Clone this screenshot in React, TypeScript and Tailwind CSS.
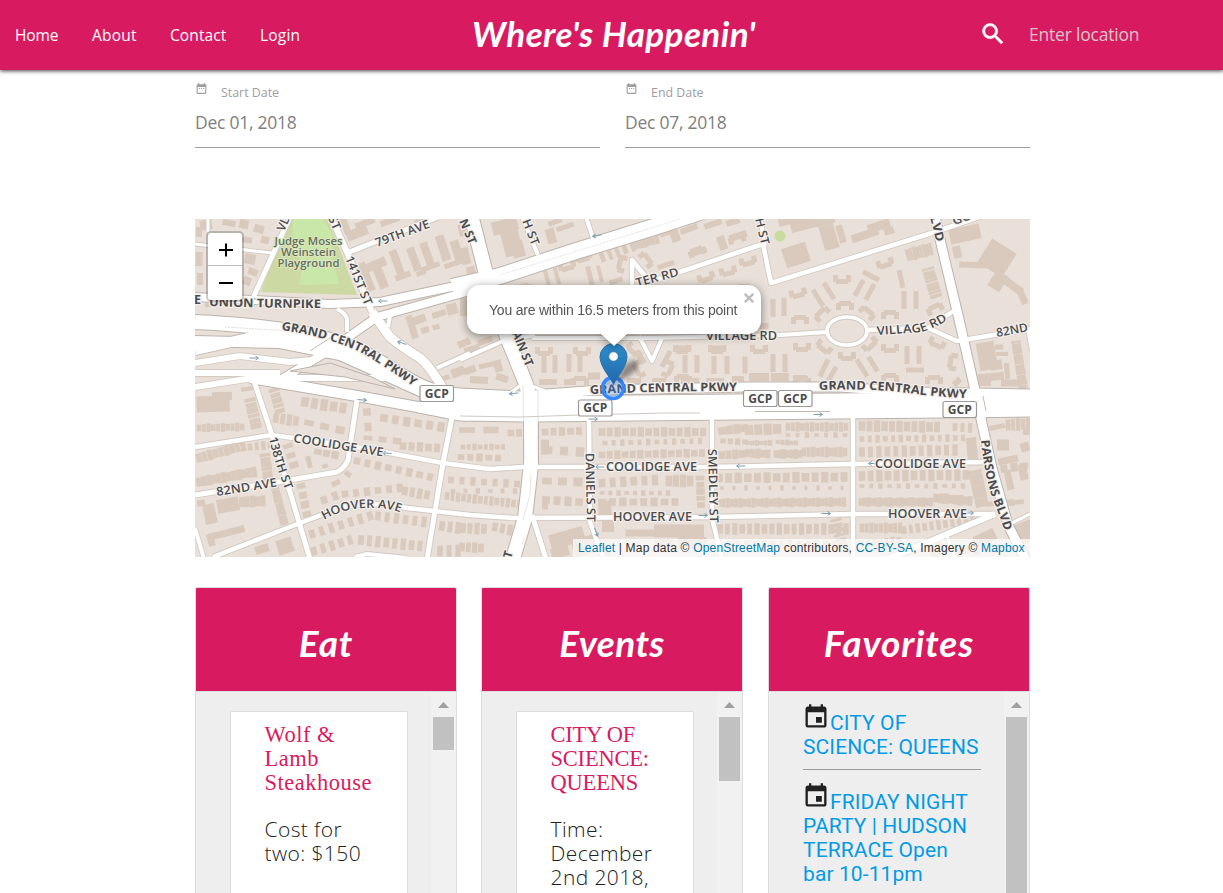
import React from "react";
import { MdDateRange, MdEvent } from "react-icons/md";

type Road = [string, number];

// Streets: path data and width
const roads: Road[] = [
  ["M195 244L272 253", 3],
  ["M208 219V232", 3],
  ["M290 217L253 298", 5],
  ["M331 217L347 252L372 312", 6],
  ["M372 312L390 337Q402 347 420 358Q430 366 445 392", 9],
  ["M347 253L438 217", 5],
  ["M337 309Q347 314 347 320V332", 4],
  ["M398 309L390 316L388 327", 4],
  ["M522 217L538 255", 4],
  ["M586 217L593 238", 4],
  ["M632 292L632 260L650 282L745 250L763 244L771 283L935 232L982 216", 4.5],
  ["M760 217L765 246", 4],
  ["M532 338H650L780 335L827 332", 4],
  ["M639 336L652 361L663 336", 4],
  ["M868 330L928 328L957 341L1030 329", 4.5],
  ["M928 328L955 310", 4.5],
  ["M460 360L503 341L535 335", 4],
  ["M437 368L470 353", 4],
  ["M195 363L240 356L290 362L312 360", 6],
  ["M195 373H280", 6],
  ["M195 387L253 378H395", 6],
  ["M253 378L272 435L290 492L310 559", 5],
  ["M195 447L272 435L357 447L443 463L490 469L523 467H712L852 464L990 462", 4.5],
  ["M195 495L290 480L337 472Q344 469 348 460L357 400", 5],
  ["M213 557L300 523L340 508Q370 500 407 508L470 515L513 518L712 517L853 514H995", 4.5],
  ["M995 514L888 559", 6],
  ["M453 412L443 463L427 559", 5],
  ["M195 528L204 559", 4],
  ["M355 557L367 554L407 558", 4],
  ["M589 418L590 522L604 559", 4.5],
  ["M712 418V518L722 559", 4.5],
  ["M853 416V559", 4.5],
  ["M532 515L546 559", 5],
  ["M947 536L955 559", 3],
  ["M1008 525L1030 514", 3],
  ["M1028 329L1032 350", 4],
  ["M510 393L524 383L545 391", 3],
];

const arterials: Road[] = [
  ["M195 297L330 304L380 302L470 283", 8],
  ["M452 287L500 276L573 252L660 225L700 212", 16],
  ["M280 380L330 350L377 317L470 291", 8],
  ["M471 215L483 262L491 295L509 342L522 374Q530 392 531 410V465L525 518L512 562", 14],
  ["M195 322Q260 325 306 334T388 367T440 392", 14],
  ["M195 350L253 337L310 344L377 366L430 396", 10],
  ["M195 341L280 343L340 355L420 391L470 400", 10],
  ["M250 378L357 396L423 408L470 416", 10],
  ["M415 388L460 393L520 396L600 390L745 387L840 387L910 392L1032 394", 9],
  ["M420 400L460 408L530 409L1032 404", 25],
  ["M935 217L942 248L958 315L975 390L983 428L992 468L1008 525L1026 560", 9],
];

// Building rows: start, end, count, building width, building height
type Row = [number, number, number, number, number, number, number];
const rows: Row[] = [
  [199, 428, 242, 427, 10, 4, 7],
  [250, 400, 256, 426, 6, 11, 4],
  [199, 458, 243, 446, 9, 5, 9],
  [250, 447, 270, 445, 4, 4, 7],
  [199, 482, 254, 472, 12, 5, 9],
  [265, 455, 268, 478, 6, 10, 4],
  [275, 488, 284, 522, 9, 8, 4],
  [242, 502, 263, 501, 5, 5, 10],
  [274, 390, 280, 411, 5, 10, 4],
  [276, 418, 296, 421, 4, 5, 10],
  [305, 402, 343, 408, 5, 7, 10],
  [309, 423, 340, 430, 3, 9, 6],
  [318, 452, 335, 455, 3, 7, 6],
  [288, 446, 294, 465, 3, 9, 5],
  [367, 412, 368, 427, 2, 7, 8],
  [384, 418, 441, 427, 6, 7, 8],
  [368, 438, 397, 441, 3, 8, 5],
  [403, 446, 437, 448, 5, 6, 8],
  [357, 461, 430, 477, 8, 6, 7],
  [345, 494, 400, 488, 6, 6, 7],
  [405, 491, 427, 495, 4, 5, 9],
  [301, 486, 307, 514, 4, 8, 6],
  [324, 500, 335, 496, 2, 6, 8],
  [312, 534, 370, 516, 7, 5, 9],
  [378, 516, 424, 522, 6, 5, 9],
  [314, 551, 350, 540, 5, 5, 9],
  [361, 540, 420, 546, 8, 5, 10],
  [442, 526, 458, 528, 3, 5, 10],
  [440, 551, 458, 551, 3, 5, 11],
  [447, 496, 519, 504, 14, 4, 8],
  [451, 480, 517, 484, 7, 5, 7],
  [453, 491, 515, 491, 6, 4, 4],
  [463, 447, 503, 447, 8, 4, 5],
  [461, 457, 498, 458, 5, 6, 6],
  [467, 430, 491, 430, 2, 15, 6],
  [511, 433, 519, 433, 2, 6, 7],
  [545, 432, 579, 431, 5, 6, 7],
  [548, 450, 580, 452, 3, 8, 8],
  [463, 528, 484, 529, 4, 5, 10],
  [495, 527, 510, 530, 3, 5, 9],
  [462, 547, 481, 548, 4, 5, 9],
  [602, 432, 703, 432, 14, 6, 8],
  [605, 443, 700, 441, 12, 4, 5],
  [602, 455, 702, 453, 14, 6, 7],
  [602, 483, 655, 480, 6, 6, 9],
  [669, 481, 690, 481, 4, 6, 11],
  [602, 493, 668, 493, 9, 4, 4],
  [602, 502, 675, 502, 8, 7, 7],
  [700, 478, 701, 505, 5, 8, 5],
  [547, 481, 578, 482, 3, 9, 7],
  [546, 500, 579, 502, 4, 7, 8],
  [722, 431, 744, 428, 4, 7, 8],
  [749, 430, 777, 429, 4, 8, 10],
  [788, 427, 846, 427, 13, 4, 8],
  [788, 435, 845, 435, 7, 4, 4],
  [723, 441, 745, 442, 4, 5, 5],
  [748, 443, 770, 443, 6, 4, 4],
  [778, 442, 796, 443, 5, 4, 4],
  [748, 453, 768, 454, 5, 5, 8],
  [776, 454, 800, 454, 7, 4, 8],
  [804, 452, 845, 452, 10, 4, 9],
  [722, 455, 742, 454, 4, 6, 8],
  [719, 478, 844, 477, 14, 7, 9],
  [722, 488, 842, 488, 11, 3, 4],
  [719, 503, 844, 502, 30, 4, 8],
  [720, 529, 846, 529, 18, 5, 10],
  [836, 520, 842, 545, 6, 11, 3],
  [720, 545, 843, 544, 15, 4, 7],
  [862, 426, 937, 427, 11, 6, 10],
  [862, 439, 963, 438, 14, 4, 6],
  [862, 452, 955, 450, 12, 5, 10],
  [971, 440, 973, 458, 5, 10, 5],
  [955, 427, 970, 428, 3, 4, 8],
  [862, 476, 966, 475, 13, 6, 10],
  [862, 486, 963, 486, 12, 4, 4],
  [861, 502, 931, 502, 20, 4, 8],
  [936, 498, 970, 501, 8, 5, 9],
  [975, 472, 982, 504, 9, 13, 4],
  [862, 528, 900, 528, 9, 4, 9],
  [904, 530, 973, 520, 11, 4, 8],
  [862, 545, 899, 541, 7, 4, 8],
  [1008, 425, 1028, 424, 5, 4, 11],
  [990, 504, 1019, 502, 4, 9, 5],
  [994, 470, 1024, 466, 4, 7, 7],
  [1016, 342, 1023, 387, 14, 9, 3],
  [908, 255, 931, 249, 8, 3, 12],
  [928, 269, 936, 296, 8, 12, 3],
  [602, 256, 632, 245, 5, 4, 13],
  [636, 243, 656, 237, 6, 4, 13],
];

// Single buildings: centre, size, rotation
type Block = [number, number, number, number, number];
const blocks: Block[] = [
  [213, 404, 33, 16, -2], [222, 396, 20, 8, -2], [228, 505, 22, 14, -10], [210, 514, 12, 20, -12],
  [226, 533, 38, 7, -14], [211, 540, 7, 12, -14], [201, 503, 8, 6, -10], [262, 549, 14, 8, -18],
  [285, 546, 16, 15, -18], [247, 389, 12, 4, -10], [309, 462, 5, 12, -14], [325, 466, 6, 4, -20],
  [336, 483, 9, 5, -25], [348, 474, 7, 5, 35], [206, 225, 12, 10, -8], [229, 223, 13, 6, 10],
  [244, 224, 9, 9, 12], [259, 229, 10, 8, 15], [247, 240, 10, 6, 8], [265, 240, 8, 7, 15],
  [199, 232, 6, 10, 0], [250, 259, 11, 10, 10], [253, 272, 10, 7, 20], [247, 281, 8, 8, 20],
  [199, 259, 7, 14, 0], [200, 279, 6, 12, 0], [211, 305, 12, 4, 0], [345, 225, 7, 18, -22],
  [357, 233, 22, 10, -22], [365, 223, 20, 6, -20], [390, 221, 20, 6, -20], [420, 221, 12, 5, -20],
  [366, 277, 9, 30, -22], [375, 265, 23, 9, -22], [380, 276, 9, 26, -22], [397, 263, 8, 27, -20],
  [403, 276, 16, 6, -20], [414, 259, 8, 24, -20], [427, 254, 8, 24, -20], [430, 267, 20, 5, -20],
  [443, 248, 9, 26, -18], [457, 251, 9, 22, -18], [453, 264, 18, 5, -18], [421, 273, 10, 5, -20],
  [412, 327, 7, 24, -18], [418, 320, 16, 8, -20], [439, 314, 14, 6, -18], [452, 309, 11, 11, -15],
  [425, 330, 8, 6, -15], [436, 327, 7, 5, -15], [464, 343, 13, 7, -22], [458, 372, 14, 9, -20],
  [445, 378, 10, 5, -20], [511, 240, 18, 32, -15], [505, 226, 26, 13, -15], [518, 249, 12, 17, -14],
  [465, 256, 9, 17, -14], [471, 271, 9, 9, -14], [462, 230, 7, 12, -14], [551, 236, 9, 15, -15],
  [565, 227, 18, 5, -18], [555, 222, 14, 5, -18], [547, 278, 4, 17, -16], [557, 276, 4, 17, -16],
  [590, 276, 5, 20, -14], [600, 274, 4, 17, -14], [616, 281, 14, 5, -18], [666, 265, 17, 5, -18],
  [465, 288, 10, 8, 0], [464, 307, 8, 18, 0], [472, 349, 16, 6, -18], [485, 341, 15, 6, -18],
  [544, 364, 5, 18, 0], [555, 364, 5, 18, 0], [569, 363, 5, 18, 0], [580, 363, 5, 18, 0],
  [548, 382, 18, 6, 0], [570, 382, 12, 6, 0], [594, 376, 12, 7, 0], [640, 357, 6, 15, -34],
  [666, 359, 5, 18, 28], [685, 364, 5, 18, 0], [697, 364, 5, 18, 0], [714, 365, 5, 18, 0],
  [727, 365, 5, 18, 0], [683, 348, 17, 5, 0], [718, 348, 17, 5, 0], [690, 381, 18, 6, 0],
  [715, 381, 18, 6, 0], [738, 379, 12, 6, 0], [634, 381, 14, 6, 0], [659, 381, 14, 6, 0],
  [488, 365, 18, 5, -12], [470, 370, 12, 7, -20], [479, 380, 18, 7, 3], [502, 378, 12, 7, 15],
  [498, 366, 8, 12, -15], [689, 229, 18, 6, -20], [675, 236, 9, 12, -20], [713, 224, 18, 6, -18],
  [722, 243, 8, 14, -20], [738, 236, 18, 7, -18], [699, 252, 16, 5, -18], [733, 222, 14, 6, -15],
  [744, 288, 12, 8, 0], [773, 308, 5, 18, 0], [784, 307, 5, 18, 0], [763, 326, 11, 6, 0],
  [796, 255, 25, 20, -18], [829, 237, 15, 25, -16], [841, 234, 7, 18, -16], [825, 221, 19, 8, -16],
  [865, 235, 28, 8, -18], [879, 226, 23, 9, -18], [889, 231, 10, 7, -18], [803, 223, 26, 14, -15],
  [787, 221, 17, 8, -15], [965, 234, 31, 15, -12], [957, 252, 8, 12, -12], [997, 258, 29, 28, 32],
  [973, 265, 28, 6, 2], [998, 281, 14, 18, 32], [1013, 286, 22, 8, 36], [1022, 296, 7, 17, -25],
  [859, 288, 5, 18, 28], [870, 292, 5, 18, 28], [818, 298, 5, 19, -32], [829, 291, 5, 19, -32],
  [871, 276, 18, 5, 28], [901, 279, 5, 18, -12], [904, 300, 5, 18, 0], [916, 300, 5, 18, 0],
  [907, 355, 5, 18, 0], [919, 355, 5, 18, 0], [915, 370, 18, 5, 0], [773, 363, 5, 18, 0],
  [785, 363, 5, 18, 0], [824, 368, 5, 19, 25], [832, 374, 5, 17, 30], [862, 368, 5, 20, -32],
  [873, 364, 5, 17, -32], [759, 377, 20, 8, 0], [780, 377, 18, 8, 0], [745, 365, 5, 17, 0],
  [800, 378, 14, 6, 0], [987, 356, 18, 28, -10], [996, 365, 12, 10, -8], [991, 377, 26, 8, -5],
  [999, 347, 8, 5, 0], [1002, 354, 12, 4, 0], [1007, 371, 5, 16, -5], [957, 382, 9, 6, -45],
  [1011, 383, 20, 7, 0], [985, 383, 12, 6, 0], [584, 546, 23, 18, -16], [567, 538, 35, 15, -16],
  [560, 552, 18, 11, -16], [608, 526, 12, 12, 0], [679, 531, 50, 13, 0], [692, 543, 29, 12, 0],
  [664, 543, 19, 8, 0], [605, 550, 9, 10, 0], [641, 533, 31, 7, 0], [1003, 445, 12, 11, 0],
  [997, 427, 16, 5, -12], [1008, 460, 20, 7, -12], [1009, 480, 7, 20, -12], [1023, 472, 8, 16, -12],
  [1027, 432, 8, 6, 0], [1025, 447, 9, 9, -15], [1025, 533, 24, 22, -22], [985, 538, 22, 12, -25],
  [937, 550, 15, 12, -25], [963, 551, 14, 8, -20], [975, 548, 6, 14, -25], [997, 549, 9, 8, -20],
  [545, 503, 6, 13, 0], [605, 508, 13, 15, 0], [545, 447, 8, 15, 0],
];

// Garden apartments: centre, rotation
const courts: [number, number, number][] = [
  [842, 279, 0], [885, 263, -18], [798, 293, -14], [800, 320, 180], [845, 306, 180],
  [822, 314, 135], [867, 313, 220], [890, 315, 180], [935, 309, 155], [937, 343, 25],
  [802, 347, 0], [847, 356, 0], [824, 347, 38], [870, 344, -42], [890, 348, 0],
  [759, 349, 0], [953, 362, 100], [934, 380, 180], [890, 378, 180], [802, 381, 180],
  [544, 351, 0], [582, 351, 0], [567, 266, -16], [583, 257, -16], [622, 264, 105],
  [646, 260, 232], [523, 289, 165], [543, 259, -16], [665, 231, -18], [697, 252, 160],
  [706, 277, -18], [737, 239, 165], [639, 369, 65], [668, 369, -65], [728, 271, -14],
  [748, 261, -14], [683, 379, 180], [614, 380, 180], [634, 350, 45], [580, 381, 180],
  [717, 349, 0], [682, 349, 0],
];

// Street names: baseline path, caption, rendered length, font weight
type Label = [string, string, number, number];
const labels: Label[] = [
  ["M284 232L291 216", "VL", 14, 600],
  ["M328 218L335 234", "ST", 14, 600],
  ["M377 247L434 226", "79TH AVE", 57, 600],
  ["M345 258L366 309", "141ST ST", 52, 600],
  ["M194 304H204", "E", 7, 700],
  ["M209 306Q265 308 323 308", "UNION TURNPIKE", 112, 700],
  ["M281 330Q330 337 362 353Q388 368 418 390", "GRAND CENTRAL PKWY", 146, 700],
  ["M459 221L470 247", "N ST", 26, 700],
  ["M522 221L533 249", "H ST", 27, 600],
  ["M755 219L762 248", "H ST", 27, 600],
  ["M637 287L682 275", "TER RD", 44, 600],
  ["M512 333L527 370", "AIN ST", 37, 700],
  ["M706 340H780", "VILLAGE RD", 71, 600],
  ["M877 335L922 332Q940 326 952 317", "VILLAGE RD", 73, 600],
  ["M997 337L1035 330", "82ND", 32, 600],
  ["M930 217L938 248", "LVD", 26, 700],
  ["M954 225L984 215", "GOL", 27, 600],
  ["M590 394Q665 391 740 391", "GRAND CENTRAL PKWY", 147, 700],
  ["M819 390Q870 388 908 393T970 398", "GRAND CENTRAL PKWY", 148, 700],
  ["M293 442L386 457", "COOLIDGE AVE", 91, 600],
  ["M217 496L280 486", "82ND AVE", 61, 600],
  ["M269 438Q274 462 287 494", "138TH ST", 55, 600],
  ["M324 520Q342 509 365 508T402 513", "HOOVER AVE", 79, 600],
  ["M606 471H700", "COOLIDGE AVE", 91, 600],
  ["M613 521H695", "HOOVER AVE", 79, 600],
  ["M585.500 453L587 525", "DANIELS ST", 69, 600],
  ["M708 449L710 526", "SMEDLEY ST", 74, 600],
  ["M875 468H970", "COOLIDGE AVE", 91, 600],
  ["M888 518H970", "HOOVER AVE", 79, 600],
  ["M981 440Q985 480 994 502T1007 540", "PARSONS BLVD", 94, 700],
  ["M511 559L514 549", "T", 7, 700],
];

const shields: [number, number][] = [[420, 385.5], [578.5, 400], [743.5, 390.5], [778.5, 390.5], [943, 401.5]];

const arrows: [number, number, number][] = [
  [254, 358, 0], [383, 301, 180], [402, 343, 200], [597, 235.5, 170], [362, 400, 5], [514, 393.500, 175],
  [593, 419, 0], [818, 414.500, 0], [387, 453, 185], [600, 467, 180], [741, 466, 180], [703, 515.500, 0],
  [826, 513.500, 0], [596, 532, 70], [873, 463.500, 180], [969, 513, 0], [258, 300, 20],
];

const places: [string, number, number][] = [
  ["Judge Moses", 245, 68],
  ["Weinstein", 256, 55],
  ["Playground", 266.5, 62],
];

function BuildingRow({ row }: { row: Row }) {
  const [x0, y0, x1, y1, n, w, h] = row;
  const angle = (Math.atan2(y1 - y0, x1 - x0) * 180) / Math.PI;
  const tilt = Math.abs(angle) > 45 ? angle - 90 : angle;
  return (
    <>
      {Array.from({ length: n }, (_, i) => {
        const t = n > 1 ? i / (n - 1) : 0;
        const x = x0 + (x1 - x0) * t;
        const y = y0 + (y1 - y0) * t;
        const hh = h + 0.6 + ((i * 7) % 3) - 1;
        const ww = w + 0.7 - ((i * 5) % 3) * 0.4;
        return <rect key={i} x={x - ww / 2} y={y - hh / 2} width={ww} height={hh} transform={`rotate(${tilt} ${x} ${y})`} />;
      })}
    </>
  );
}

function StreetMap() {
  return (
    <svg className="block h-full w-full" viewBox="195 219 835 338" fontFamily="'Open Sans', 'Noto Sans', sans-serif">
      <defs>
        <linearGradient id="pin" x1="0" y1="0" x2="0" y2="1">
          <stop offset="0" stopColor="#2f8fcb" />
          <stop offset="1" stopColor="#2068ad" />
        </linearGradient>
        <filter id="soft" x="-50%" y="-50%" width="200%" height="200%">
          <feGaussianBlur stdDeviation="2.500" />
        </filter>
      </defs>
      <rect x="195" y="219" width="835" height="338" fill="#e8e0d9" />
      <path d="M286 219H328L357 295L261 292Z" fill="#cdd9a2" />
      <path d="M293 219H323L333 235L331 254L339 284L299 285L303 263L292 247Z" fill="#c8e7a9" />
      <circle cx="780" cy="236" r="5.500" fill="#cadb9f" />
      <g fill="#d9cabd">
        {rows.map((row, i) => <BuildingRow key={i} row={row} />)}
        {blocks.map(([x, y, w, h, r], i) => (
          <rect key={i} x={x - w / 2} y={y - h / 2} width={w} height={h} transform={`rotate(${r} ${x} ${y})`} />
        ))}
        {courts.map(([x, y, r], i) => (
          <path key={i} d="M-9 -4H-4V0H4V-4H9V3H6V5H-6V3H-9Z" transform={`translate(${x} ${y}) rotate(${r})`} />
        ))}
      </g>
      <g fill="none" stroke="#d2c9c1" strokeLinejoin="round">
        {roads.map(([d, w], i) => <path key={i} d={d} strokeWidth={w + 1.8} />)}
        <ellipse cx="847" cy="331" rx="20" ry="14" strokeWidth="5.500" />
      </g>
      <g fill="none" stroke="#bcb4ac" strokeLinejoin="round">
        {arterials.map(([d, w], i) => <path key={i} d={d} strokeWidth={w + 2} />)}
      </g>
      <g fill="none" stroke="#fff" strokeLinejoin="round">
        {roads.map(([d, w], i) => <path key={i} d={d} strokeWidth={w} />)}
        <ellipse cx="847" cy="331" rx="20" ry="14" strokeWidth="3.700" />
        {arterials.map(([d, w], i) => <path key={i} d={d} strokeWidth={w} />)}
      </g>
      <path d="M330 363L372 377L395 389L345 377L290 371Z" fill="#e8e0d9" stroke="#bcb4ac" strokeWidth="1" />
      <g fill="none" stroke="#c3bbb4" strokeWidth="1">
        <path d="M531 475L530 495L523 520M524 538L522 545M523 385L524 460M538 390V460" opacity=".4" />
        <path d="M460 416L520 417L580 415M580 415L665 413L700 413" opacity=".8" />
        <path d="M755 411.500H830M983 396L986 411" />
        <path d="M310 351L336 334" />
        <path d="M225 327L290 331" strokeDasharray="2 1" opacity=".5" />
        <path d="M500 275L680 219" strokeDasharray="2 1" opacity=".4" />
      </g>
      <g fill="none" stroke="#7d9eae" strokeWidth="1">
        {arrows.map(([x, y, r], i) => (
          <path key={i} d="M-4.500 0H4M1.500 -2L4.500 0L1.500 2" transform={`translate(${x} ${y}) rotate(${r})`} />
        ))}
      </g>
      <g fill="#4c4c4e" fontSize="12" stroke="#f3eeea" strokeWidth="2.500" strokeLinejoin="round">
        {labels.map(([d, text, length, weight], i) => (
          <React.Fragment key={i}>
            <path id={`street-${i}`} d={d} fill="none" stroke="none" />
            <text fontWeight={weight} textLength={length} lengthAdjust="spacingAndGlyphs" className="[paint-order:stroke]">
              <textPath href={`#street-${i}`} textLength={length} lengthAdjust="spacingAndGlyphs">{text}</textPath>
            </text>
          </React.Fragment>
        ))}
      </g>
      <g fill="#66705c" fontSize="11.500" fontWeight="600" textAnchor="middle" stroke="#dce6c0" strokeWidth="2" strokeLinejoin="round">
        {places.map(([name, y, length]) => (
          <text key={name} x="308.500" y={y} textLength={length} lengthAdjust="spacingAndGlyphs" className="[paint-order:stroke]">{name}</text>
        ))}
      </g>
      {shields.map(([x, y]) => (
        <g key={x}>
          <rect x={x} y={y} width="33.500" height="16" rx="2" fill="#fff" stroke="#9c9895" strokeWidth="1.200" />
          <text x={x + 16.75} y={y + 12.3} textAnchor="middle" fontSize="12" fontWeight="700" fill="#4c4c4e" textLength="24" lengthAdjust="spacingAndGlyphs">GCP</text>
        </g>
      ))}
      <circle cx="613" cy="388" r="10.500" fill="#3388ff" fillOpacity=".25" stroke="#3388ff" strokeWidth="3.500" />
      <path d="M614 383L624 366Q633 357 637 362T629 376Z" fill="#000" opacity=".4" filter="url(#soft)" />
      <path d="M613.500 384.500C611 378 600.500 368 600 357A13.500 13.500 0 0 1 627 357C626.500 368 616 378 613.500 384.500Z" fill="url(#pin)" stroke="#2873ad" strokeWidth="1" />
      <circle cx="613.500" cy="356.500" r="4.700" fill="#fff" stroke="#2a70a5" strokeWidth=".6" />
    </svg>
  );
}

function SearchIcon() {
  return (
    <svg className="mb-[3px] h-[28px] w-[28px] shrink-0" viewBox="0 0 24 24" fill="currentColor" stroke="currentColor" strokeWidth="0.5">
      <path d="M15.500 14h-.79l-.28-.27A6.471 6.471 0 0 0 16 9.500 6.500 6.500 0 1 0 9.500 16c1.610 0 3.090-.59 4.230-1.570l.27.28v.79l5 4.990L20.490 19l-4.990-5zm-6 0C7.010 14 5 11.990 5 9.500S7.010 5 9.500 5 14 7.010 14 9.500 11.990 14 9.500 14z" />
    </svg>
  );
}

function DateField({ label, value }: { label: string; value: string }) {
  return (
    <div className="h-[78px] border-b border-[#9e9e9e] font-['Open_Sans','Noto_Sans',sans-serif]">
      <div className="flex h-[35px] items-start pt-[12px] text-[#9e9e9e]">
        <MdDateRange size={13} />
        <span className="ml-[13px] pt-[1px] text-[12.4px] leading-[20px]">{label}</span>
      </div>
      <div className="pt-[4px] text-[17.5px] leading-[26px] tracking-[-0.25px] text-[#808080]">{value}</div>
    </div>
  );
}

function Scrollbar({ thumb }: { thumb: string }) {
  return (
    <div className="flex w-[25px] shrink-0 flex-col items-center bg-[#f1f1f1] pt-[10px]">
      <svg className="h-[6px] w-[11px]" viewBox="0 0 11 6"><path d="M0 6L5.500 0L11 6Z" fill="#a0a0a0" /></svg>
      <div className={`mt-[9px] w-[21px] bg-[#c1c1c1] ${thumb}`} />
    </div>
  );
}

function Panel({ title, heading, thumb, children }: { title: string; heading: string; thumb: string; children: React.ReactNode }) {
  return (
    <section className="flex h-[306px] flex-col overflow-hidden rounded-t-[2px] border border-b-0 border-[#ddd]">
      <h2 className={`flex h-[103px] shrink-0 items-center justify-center bg-[#d81b60] pt-[6px] font-['Lato','Open_Sans',sans-serif] text-[37px] leading-none font-bold text-white italic ${heading}`}>
        {title}
      </h2>
      <div className="flex grow border-t border-[#ddd] bg-[#eee]">
        <div className="grow">{children}</div>
        <Scrollbar thumb={thumb} />
      </div>
    </section>
  );
}

function ResultCard({ title, titleClass, lines }: { title: string[]; titleClass: string; lines: string[] }) {
  return (
    <div className="mt-[19px] ml-[34px] h-[184px] w-[178px] rounded-t-[2px] border border-b-0 border-[#ddd] bg-white pt-[11px] pl-[33.5px]">
      <h3 className={`font-['Liberation_Serif',serif] leading-[24px] text-[#d81b60] ${titleClass}`}>
        {title.map((line) => <div key={line} className="whitespace-nowrap">{line}</div>)}
      </h3>
      <div className="mt-[22px] font-['Open_Sans','Noto_Sans',sans-serif] text-[21px] leading-[24px] font-light tracking-[0.4px] text-[#212121]">
        {lines.map((line) => <div key={line} className="whitespace-nowrap">{line}</div>)}
      </div>
    </div>
  );
}

function Favorite({ lines }: { lines: string[] }) {
  return (
    <div className="font-['Roboto',sans-serif] text-[21px] leading-[24px] tracking-[0.1px] text-[#039be5]">
      <div className="flex h-[31px] items-start whitespace-nowrap">
        <MdEvent size={28} className="-mt-px -ml-[1px] shrink-0 text-[#212121]" />
        <span className="pt-[7px]">{lines[0]}</span>
      </div>
      {lines.slice(1).map((line) => <div key={line} className="whitespace-nowrap">{line}</div>)}
    </div>
  );
}

export default function App() {
  return (
    <div className="h-[893px] w-[1223px] overflow-hidden bg-white">
      <header className="relative flex h-[70px] items-center bg-[#d81b60] font-['Open_Sans','Noto_Sans',sans-serif] text-white shadow-[0_1px_4px_rgba(0,0,0,0.75)]">
        <nav className="flex w-[472px] pl-[15px] text-[15.5px] leading-[20px]">
          <a className="w-[77px] tracking-[-0.1px]">Home</a>
          <a className="w-[78px] tracking-[0.2px]">About</a>
          <a className="w-[90px] tracking-[0.1px]">Contact</a>
          <a className="tracking-[0.2px]">Login</a>
        </nav>
        <h1 className="w-[507px] pb-[4px] font-['Lato','Open_Sans',sans-serif] text-[35px] leading-none font-bold tracking-[0.4px] whitespace-nowrap italic">Where's Happenin'</h1>
        <SearchIcon />
        <span className="mb-[2px] ml-[22px] text-[17.5px] leading-[24px] tracking-[-0.2px] text-[#dcc3cb]">Enter location</span>
      </header>
      <main className="ml-[195px] w-[835px]">
        <div className="grid grid-cols-2 gap-[25px]">
          <DateField label="Start Date" value="Dec 01, 2018" />
          <DateField label="End Date" value="Dec 07, 2018" />
        </div>
        <div className="relative mt-[71px] h-[338px] overflow-hidden">
          <StreetMap />
          <div className="absolute top-[12px] left-[11px] flex h-[71px] w-[38px] flex-col rounded-[5px] border-2 border-black/20 bg-white bg-clip-padding">
            <button className="flex h-[33px] items-center justify-center border-b border-[#bbb] pt-[2px] pl-px">
              <svg className="h-[14px] w-[14px]" viewBox="0 0 14 14" stroke="#000" strokeWidth="2"><path d="M0 7H14M7 .5V13.500" /></svg>
            </button>
            <button className="flex h-[33px] items-center justify-center pl-px">
              <svg className="h-[14px] w-[14px]" viewBox="0 0 14 14" stroke="#000" strokeWidth="2"><path d="M0 7H14" /></svg>
            </button>
          </div>
          <div className="absolute top-[66px] left-[272px] drop-shadow-[0_2px_5px_rgba(0,0,0,0.45)]">
            <div className="flex h-[49px] w-[294px] items-center rounded-[13px] bg-white pt-px pl-[22px] font-['Liberation_Sans',sans-serif] text-[14px] tracking-[-0.21px] whitespace-nowrap text-[#555]">
              You are within 16.5 meters from this point
            </div>
            <svg className="mx-auto block h-[12px] w-[26px]" viewBox="0 0 26 12"><path d="M0 0H26L13 12Z" fill="#fff" /></svg>
            <svg className="absolute top-[8px] right-[7px] h-[10px] w-[10px]" viewBox="0 0 10 10" stroke="#bdbdbd" strokeWidth="2.400"><path d="M.8 .8L9.200 9.200M9.200 .8L.8 9.200" /></svg>
          </div>
          <div className="absolute right-0 bottom-0 h-[18px] w-[457px] bg-white/70 pl-[5px] font-['Liberation_Sans',sans-serif] text-[12px] leading-[18px] tracking-[0.18px] whitespace-nowrap text-[#333]">
            <span className="text-[#0078a8]">Leaflet</span> | Map data © <span className="text-[#0078a8]">OpenStreetMap</span> contributors, <span className="text-[#0078a8]">CC-BY-SA</span>, Imagery © <span className="text-[#0078a8]">Mapbox</span>
          </div>
        </div>
        <div className="mt-[30px] grid grid-cols-[262px_262px_262px] justify-start">
          <Panel title="Eat" heading="tracking-[0.8px]" thumb="h-[33px]">
            <ResultCard title={["Wolf &", "Lamb", "Steakhouse"]} titleClass="text-[22.5px] tracking-[0.5px]" lines={["Cost for", "two: $150"]} />
          </Panel>
          <div className="ml-[24px] w-[262px]">
            <Panel title="Events" heading="tracking-[0.4px]" thumb="h-[64px]">
              <ResultCard title={["CITY OF", "SCIENCE:", "QUEENS"]} titleClass="text-[22.5px] tracking-[-0.2px]" lines={["Time:", "December", "2nd 2018,"]} />
            </Panel>
          </div>
          <div className="ml-[49px] w-[262px]">
            <Panel title="Favorites" heading="tracking-[0.9px]" thumb="h-[176px]">
              <div className="pt-[12px] pl-[34px]">
                <Favorite lines={["CITY OF", "SCIENCE: QUEENS"]} />
                <hr className="mt-[10px] mb-[13px] w-[178px] border-[#9a9a9a]" />
                <Favorite lines={["FRIDAY NIGHT", "PARTY | HUDSON", "TERRACE Open", "bar 10-11pm"]} />
              </div>
            </Panel>
          </div>
        </div>
      </main>
    </div>
  );
}
